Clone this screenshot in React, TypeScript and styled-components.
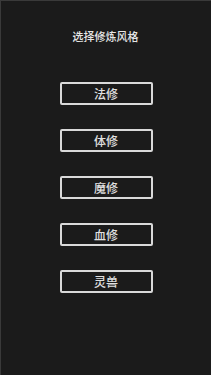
import React from "react";
import styled, { createGlobalStyle } from "styled-components";

const GlobalStyle = createGlobalStyle`
  html, body {
    margin: 0;
    padding: 0;
    background: #1b1b1b;
  }
  * {
    box-sizing: border-box;
  }
`;

const Screen = styled.div`
  width: 211px;
  height: 375px;
  background: #1b1b1b;
  border-top: 1px solid #3a3a3a;
  border-left: 1px solid #3a3a3a;
  display: flex;
  flex-direction: column;
  align-items: center;
  padding-top: 28px;
  font-family: "Noto Sans CJK SC", "Noto Sans", sans-serif;
`;

const Title = styled.div`
  color: #e6e6e6;
  font-size: 11px;
  line-height: 14px;
  font-weight: 500;
  margin-left: -1px;
`;

const ButtonList = styled.div`
  display: flex;
  flex-direction: column;
  gap: 24px;
  margin-top: 39px;
`;

const StyleButton = styled.button`
  width: 93px;
  height: 23px;
  padding: 0;
  background: transparent;
  border: 2px solid #d9d9d9;
  border-radius: 2px;
  color: #e0e0e0;
  font-family: "Noto Sans CJK SC", "Noto Sans", sans-serif;
  font-size: 12px;
  font-weight: 500;
  line-height: 19px;
  cursor: pointer;
`;

const styles = ["法修", "体修", "魔修", "血修", "灵兽"];

function App() {
  return (
    <>
      <GlobalStyle />
      <Screen>
        <Title>选择修炼风格</Title>
        <ButtonList>
          {styles.map((name) => (
            <StyleButton key={name}>{name}</StyleButton>
          ))}
        </ButtonList>
      </Screen>
    </>
  );
}

export default App;
